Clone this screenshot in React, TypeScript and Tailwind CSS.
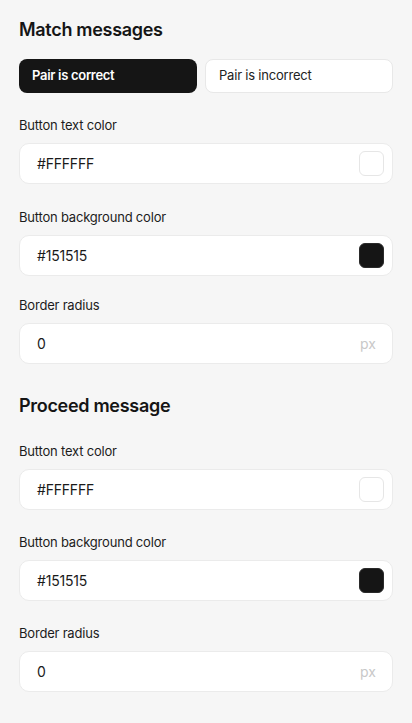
import React from "react";

const font = { fontFamily: "Inter, 'Noto Sans', sans-serif" };

function Field({
  label,
  value,
  swatch,
  suffix,
  className,
}: {
  label: string;
  value: string;
  swatch?: "white" | "dark";
  suffix?: string;
  className?: string;
}) {
  return (
    <div className={className}>
      <div className="text-[13px] leading-4 text-[#1c1c1c] mb-[10px] tracking-[-0.2px]">{label}</div>
      <div className="h-[41px] bg-white border border-[#ebebeb] rounded-[10px] flex items-center pl-[17px] pr-[8px]">
        <span className="flex-1 text-[14px] text-[#1a1a1a] tracking-[-0.2px]">{value}</span>
        {swatch === "white" && (
          <span className="w-[25px] h-[25px] rounded-[6px] bg-white border border-[#e6e6e6]" />
        )}
        {swatch === "dark" && (
          <span className="w-[25px] h-[25px] rounded-[6px] bg-[#151515] border border-[#2a2a2a]" />
        )}
        {suffix && <span className="text-[14px] text-[#c8c8c8] mr-[8px]">{suffix}</span>}
      </div>
    </div>
  );
}

export default function App() {
  return (
    <div style={font} className="min-h-screen w-full bg-[#f6f6f6] px-[19px] pt-[18px] pb-[30px]">
      <h2 className="text-[18px] leading-6 font-semibold text-[#151515] tracking-[-0.3px]">Match messages</h2>
      <div className="mt-[17px] flex gap-[8px]">
        <button className="w-[178px] h-[34px] rounded-[8px] bg-[#151515] text-white text-[13px] font-semibold text-left pl-[13px] tracking-[-0.3px]">
          Pair is correct
        </button>
        <button className="flex-1 h-[34px] rounded-[8px] bg-white border border-[#e8e8e8] text-[#222] text-[13px] text-left pl-[13px] tracking-[-0.2px]">
          Pair is incorrect
        </button>
      </div>
      <Field className="mt-[24px]" label="Button text color" value="#FFFFFF" swatch="white" />
      <Field className="mt-[25px]" label="Button background color" value="#151515" swatch="dark" />
      <Field className="mt-[21px]" label="Border radius" value="0" suffix="px" />

      <h2 className="mt-[30px] text-[18px] leading-6 font-semibold text-[#151515] tracking-[-0.3px]">Proceed message</h2>
      <Field className="mt-[25px]" label="Button text color" value="#FFFFFF" swatch="white" />
      <Field className="mt-[24px]" label="Button background color" value="#151515" swatch="dark" />
      <Field className="mt-[24px]" label="Border radius" value="0" suffix="px" />
    </div>
  );
}
